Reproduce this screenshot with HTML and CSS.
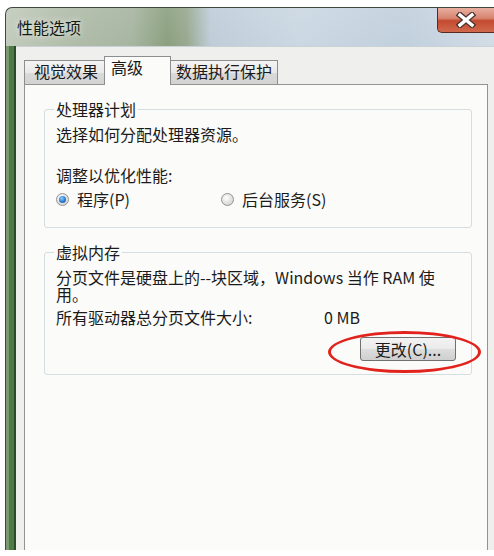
FILE: index.html
```html
<!DOCTYPE html>
<html lang="zh-CN">
<head>
    <meta charset="UTF-8">
    <title>性能选项</title>
    <link rel="stylesheet" href="styles.css">
</head>
<body>
    <div class="window">
        <div class="titlebar">
            <span class="title">性能选项</span>
            <div class="close-btn">
                <svg width="22" height="16" viewBox="0 0 22 16">
                    <path d="M5 3 L17 13 M17 3 L5 13" stroke="#4a3430" stroke-width="6" stroke-linecap="square" fill="none"/>
                    <path d="M5 3 L17 13 M17 3 L5 13" stroke="#ffffff" stroke-width="3.4" stroke-linecap="square" fill="none"/>
                </svg>
            </div>
        </div>
        <div class="frame">
            <div class="client">
                <div class="tabs">
                    <div class="tab first">视觉效果</div>
                    <div class="tab active">高级</div>
                    <div class="tab last">数据执行保护</div>
                </div>
                <div class="tab-page">
                    <fieldset class="group">
                        <legend>处理器计划</legend>
                        <p class="desc">选择如何分配处理器资源。</p>
                        <p class="prompt">调整以优化性能:</p>
                        <div class="radios">
                            <label class="radio"><span class="radio-dot checked"></span>程序(P)</label>
                            <label class="radio"><span class="radio-dot"></span>后台服务(S)</label>
                        </div>
                    </fieldset>
                    <fieldset class="group memory">
                        <legend>虚拟内存</legend>
                        <p class="wrap">分页文件是硬盘上的--块区域，Windows 当作 RAM 使<br>用。</p>
                        <div class="size-row">
                            <span class="size-label">所有驱动器总分页文件大小:</span>
                            <span>0 MB</span>
                        </div>
                        <div class="actions">
                            <span class="btn-wrap">
                                <button class="btn">更改(C)...</button>
                                <span class="highlight"></span>
                            </span>
                        </div>
                    </fieldset>
                </div>
            </div>
        </div>
    </div>
</body>
</html>
```

FILE: styles.css
```css
html, body {
    margin: 0;
    padding: 0;
    background: #ffffff;
    overflow: hidden;
}
body {
    font-family: "Noto Sans CJK SC", "Noto Sans", sans-serif;
    font-size: 16px;
    color: #1b1b1b;
}
.window {
    box-sizing: border-box;
    width: 489px;
    height: 543px;
    margin: 7px 0 0 5px;
    border: 1px solid #3d4a3c;
    border-right: none;
    border-bottom: none;
    border-radius: 7px 0 0 0;
    display: flex;
    flex-direction: column;
    overflow: hidden;
    background:
        linear-gradient(to bottom, rgba(255, 255, 255, 0.35), rgba(255, 255, 255, 0) 40%),
        linear-gradient(to right, #a9b6a1 0, #93a389 12%, #82977a 26%, #5d7a4c 33%, #6f8663 37%, #a6b9c9 42%, #b6c7d6 60%, #a9bdd0 82%, #bfcedb 100%);
}
.titlebar {
    height: 38px;
    display: flex;
    align-items: flex-start;
}
.title {
    flex: 1;
    padding: 11px 0 0 11px;
    font-size: 16px;
    line-height: 17px;
    color: #141a14;
    text-shadow: 0 0 6px rgba(255, 255, 255, 0.9);
}
.close-btn {
    box-sizing: border-box;
    width: 57px;
    height: 26px;
    margin-top: -1px;
    border: 1px solid #5a2a22;
    border-right: none;
    border-top: none;
    border-radius: 0 0 0 5px;
    background: linear-gradient(to bottom, #eab3a5 0, #d7846f 45%, #c44a30 55%, #d0694d 100%);
    display: flex;
    align-items: center;
    padding-left: 17px;
}
.frame {
    flex: 1;
    display: flex;
    padding-left: 10px;
    background: linear-gradient(to right, #7c9a72 0 3px, #4d7b45 3px 8px, #2f4a2b 8px 10px);
}
.client {
    flex: 1;
    display: flex;
    flex-direction: column;
    padding: 9px 6px 0 8px;
    background: #efefee;
    border-top: 1px solid #c9d0d6;
}
.tabs {
    display: flex;
    align-items: flex-end;
    height: 28px;
    font-size: 16px;
    line-height: 20px;
}
.tab {
    box-sizing: border-box;
    height: 24px;
    border: 1px solid #8d8e90;
    border-bottom: none;
    background: linear-gradient(to bottom, #f4f4f4 0, #e9e9e9 50%, #d9d9d9 52%, #d3d3d3 100%);
    color: #1a1a1a;
}
.tab.first {
    padding: 0 6px 0 9px;
    border-right: none;
}
.tab.active {
    position: relative;
    z-index: 1;
    height: 29px;
    margin-bottom: -1px;
    padding: 0 27px 0 6px;
    background: #fbfcf9;
}
.tab.last {
    padding: 0 5px;
    border-left: none;
}
.tab-page {
    flex: 1;
    border: 1px solid #939393;
    border-bottom: none;
    background: #fbfcf9;
    padding: 16px 15px 0 19px;
}
.group {
    margin: 0;
    padding: 8px 15px 19px 11px;
    border: 1px solid #d5dde3;
    border-radius: 3px;
    line-height: 17px;
}
.group legend {
    padding: 0 2px;
    margin-left: -2px;
    line-height: 17px;
}
.group p {
    margin: 0;
}
.prompt {
    margin-top: 24px !important;
}
.radios {
    margin-top: 7px;
    display: grid;
    grid-template-columns: 165px auto;
}
.radio {
    display: flex;
    align-items: center;
    gap: 8px;
}
.radio-dot {
    position: relative;
    box-sizing: border-box;
    width: 13px;
    height: 13px;
    border: 1px solid #939393;
    border-radius: 50%;
    background: radial-gradient(circle at 40% 35%, #ffffff 0, #e6e6e6 45%, #c9c9c9 100%);
}
.radio-dot.checked::after {
    content: "";
    position: absolute;
    left: 2px;
    top: 2px;
    width: 7px;
    height: 7px;
    border-radius: 50%;
    background: radial-gradient(circle at 40% 35%, #8fd0ff 0, #2f7fd4 50%, #1c4f9a 100%);
}
.memory {
    margin-top: 16px;
    padding-bottom: 13px;
}
.wrap {
    line-height: 17px;
}
.size-row {
    display: flex;
    margin-top: 6px;
}
.size-label {
    width: 268px;
}
.actions {
    display: flex;
    justify-content: flex-end;
    margin-top: 11px;
}
.btn-wrap {
    position: relative;
    display: block;
}
.btn {
    display: block;
    box-sizing: border-box;
    width: 96px;
    height: 24px;
    padding: 0;
    border: 1px solid #707070;
    border-radius: 3px;
    background: linear-gradient(to bottom, #f3f3f3 0, #ebebeb 48%, #dddddd 52%, #cfcfcf 100%);
    font-family: "Noto Sans CJK SC", "Noto Sans", sans-serif;
    font-size: 16px;
    line-height: 20px;
    color: #1b1b1b;
}
.highlight {
    position: absolute;
    left: -32px;
    top: -6px;
    width: 153px;
    height: 42px;
    box-sizing: border-box;
    border: 3px solid #e2231d;
    border-radius: 50%;
    pointer-events: none;
}
```
